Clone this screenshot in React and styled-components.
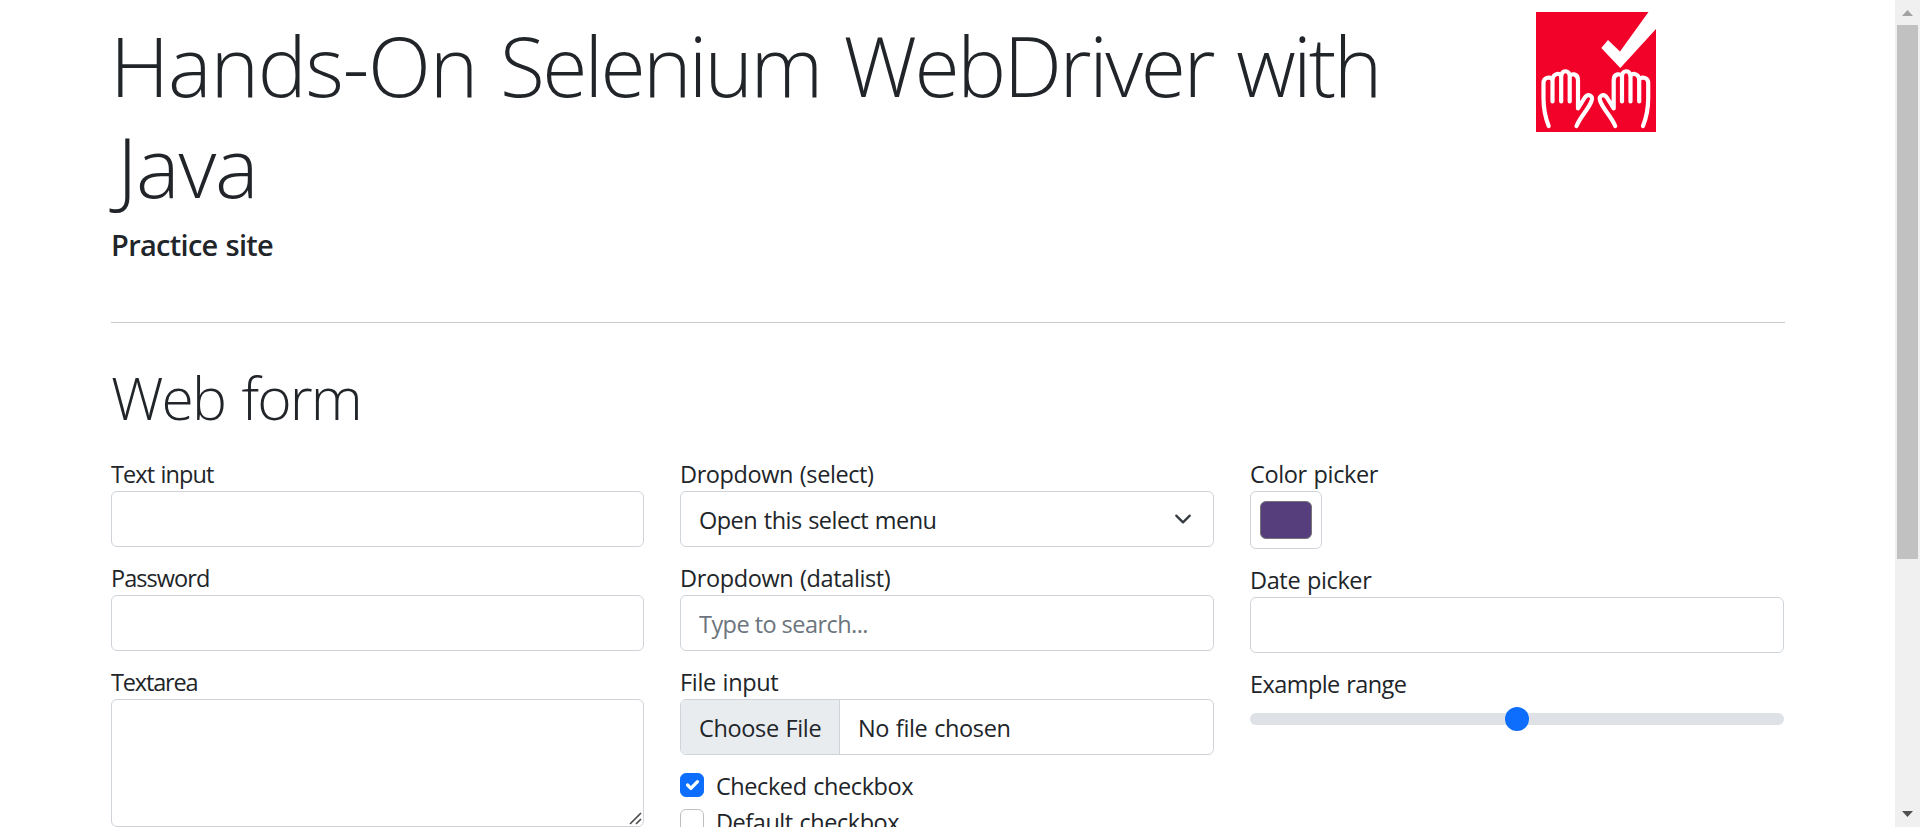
import React from "react";
import styled, { createGlobalStyle, css } from "styled-components";

const GlobalStyle = createGlobalStyle`
  *, *::before, *::after { box-sizing: border-box; }
  body {
    margin: 0;
    background: #fff;
    color: #212529;
    font: 400 23.5px/36px "Segoe UI", "Open Sans", "Noto Sans", sans-serif;
    word-spacing: 1px;
    overflow: hidden;
  }
`;

const Viewport = styled.div`
  display: flex;
  height: 827px;
  overflow: hidden;
`;

const Page = styled.main`
  flex: 1;
  min-width: 0;
  padding: 0 110px 0 111px;
  overflow: hidden;
`;

const Header = styled.header`
  display: flex;
  height: 322px;
`;

const Titles = styled.div`
  width: 1425px;
  padding-top: 15px;
`;

const Title = styled.h1`
  margin: 0 0 0 -1px;
  font-size: 82.3px;
  font-weight: 300;
  line-height: 101px;
  word-spacing: 1.6px;
`;

const Word = styled.span`
  margin-left: ${(p) => p.$indent || 0}px;
  letter-spacing: ${(p) => p.$tracking}px;
`;

const Subtitle = styled.h5`
  margin: 10px 0 0;
  font-size: 29px;
  font-weight: 600;
  line-height: 36px;
  letter-spacing: -0.7px;
`;

const Logo = styled.svg`
  width: 120px;
  height: 120px;
  margin-top: 12px;
`;

const Rule = styled.hr`
  width: 1674px;
  height: 1px;
  margin: 0;
  border: 0;
  background: #c8c9ca;
`;

const FormTitle = styled.h1`
  margin: 38px 0 22px;
  font-size: 58.8px;
  font-weight: 300;
  line-height: 72px;
  letter-spacing: -1.9px;
  word-spacing: 3px;
`;

const Columns = styled.form`
  display: grid;
  grid-template-columns: 533px 534px 534px;
  column-gap: 36px;
  align-items: start;
`;

const Column = styled.div`
  display: flex;
  flex-direction: column;
  gap: 12px;
`;

const FieldLabel = styled.label`
  display: block;
`;

const Caption = styled.span`
  display: block;
  height: 36px;
  line-height: 38px;
  white-space: nowrap;
  letter-spacing: ${(p) => p.$tracking}px;
`;

const control = css`
  display: flex;
  align-items: center;
  width: 100%;
  height: 56px;
  margin: 0;
  border: 1px solid #ced4da;
  border-radius: 6px;
  background: #fff;
  color: #212529;
  font: inherit;
  outline: 0;
`;

const TextControl = styled.input`
  ${control}
  padding: 2px 18px 0;
  letter-spacing: -0.55px;
  &::placeholder { color: #6c757d; opacity: 1; }
`;

const TextAreaFrame = styled.span`
  display: block;
  position: relative;
  height: 128px;
`;

const TextArea = styled.textarea`
  ${control}
  height: 128px;
  padding: 9px 18px;
  resize: none;
`;

const Grip = styled.svg`
  position: absolute;
  right: 2px;
  bottom: 2px;
  width: 13px;
  height: 13px;
`;

const SelectControl = styled.span`
  ${control}
  justify-content: space-between;
  padding: 0 18px;
  letter-spacing: -0.52px;
`;

const SelectValue = styled.span`
  padding-top: 2px;
`;

const Chevron = styled.svg`
  width: 24px;
  height: 18px;
`;

const FileControl = styled.span`
  ${control}
  overflow: hidden;
`;

const FileButton = styled.span`
  width: 159px;
  height: 54px;
  padding-left: 18px;
  border-right: 1px solid #ced4da;
  background: #e9ecef;
  line-height: 56px;
  letter-spacing: -0.36px;
`;

const FileName = styled.span`
  padding: 2px 0 0 18px;
  letter-spacing: -0.36px;
`;

const Checks = styled.div`
  display: flex;
  flex-direction: column;
`;

const Check = styled.label`
  display: flex;
  align-items: flex-start;
  height: 36px;
  gap: 12px;
`;

const CheckBox = styled.span`
  width: 24px;
  height: 24px;
  margin-top: 6px;
  border: 1px solid ${(p) => (p.$checked ? "#0d6efd" : "#bfbfbf")};
  border-radius: 6px;
  background: ${(p) => (p.$checked ? "#0d6efd" : "#fff")};
  svg { display: block; width: 22px; height: 22px; }
`;

const ColorControl = styled.span`
  ${control}
  width: 72px;
  height: 58px;
  padding: 9px;
`;

const Swatch = styled.span`
  width: 52px;
  height: 38px;
  border: 1px solid #767676;
  border-radius: 6px;
  background: #563d7c;
`;

const Range = styled.span`
  display: flex;
  align-items: center;
  justify-content: center;
  height: 12px;
  margin-top: 12px;
  border-radius: 12px;
  background: #dee2e6;
`;

const Thumb = styled.span`
  flex: none;
  width: 24px;
  height: 24px;
  border-radius: 50%;
  background: #0d6efd;
`;

const ScrollBar = styled.aside`
  display: flex;
  flex-direction: column;
  align-items: center;
  width: 25px;
  background: #f0f0f0;
`;

const ScrollArrow = styled.svg`
  width: 25px;
  height: 25px;
`;

const ScrollThumb = styled.div`
  width: 21px;
  height: 534px;
  margin-bottom: auto;
  background: #c1c1c1;
`;

const HandShape = () => (
  <g fill="none" stroke="#fff" strokeWidth="4.2" strokeLinecap="round" strokeLinejoin="round">
    <path d="M12.7 114C9.5 106 7.5 96 7.5 86V71.5C7.5 64.5 15 64.5 16.5 68V89.5M16.5 68C17 60.500 25 60.500 25.200 65V89.500M25.200 65C25.500 57.500 33.500 57.500 33.700 64V89.500M33.700 65C34.500 60.500 42 61.500 42 68V96.500L48.500 86C52 80.500 58 84 55.500 89C52.500 97.500 45 103.500 40.500 114" />
  </g>
);

const Field = ({ label, tracking, children }) => (
  <FieldLabel>
    <Caption $tracking={tracking}>{label}</Caption>
    {children}
  </FieldLabel>
);

export default function App() {
  return (
    <>
      <GlobalStyle />
      <Viewport>
        <Page>
          <Header>
            <Titles>
              <Title>
                <Word $tracking={-1.2}>Hands-On</Word> <Word $tracking={-2.75}>Selenium</Word>{" "}
                <Word $tracking={-2.4}>WebDriver</Word> <Word $tracking={-2.7}>with</Word>
                <br />
                <Word $tracking={-1.2} $indent={7}>Java</Word>
              </Title>
              <Subtitle>Practice site</Subtitle>
            </Titles>
            <Logo viewBox="0 0 120 120">
              <rect width="120" height="120" fill="#f20229" />
              <path d="M65.3 36 72 28 84 39.500 112.500 0H120V17L84.300 56Z" fill="#fff" />
              <HandShape />
              <g transform="translate(119.700 0) scale(-1 1)">
                <HandShape />
              </g>
            </Logo>
          </Header>
          <Rule />
          <FormTitle>Web form</FormTitle>
          <Columns>
            <Column>
              <Field label="Text input" tracking={-0.9}>
                <TextControl type="text" />
              </Field>
              <Field label="Password" tracking={-0.95}>
                <TextControl type="password" />
              </Field>
              <Field label="Textarea" tracking={-1.15}>
                <TextAreaFrame>
                  <TextArea />
                  <Grip viewBox="0 0 13 13">
                    <path d="M1 12 12 1M7 12l5-5" stroke="#4d4d4d" strokeWidth="1.7" fill="none" />
                  </Grip>
                </TextAreaFrame>
              </Field>
            </Column>
            <Column>
              <Field label="Dropdown (select)" tracking={-0.4}>
                <SelectControl>
                  <SelectValue>Open this select menu</SelectValue>
                  <Chevron viewBox="0 0 16 16">
                    <path d="m2 5 6 6 6-6" fill="none" stroke="#343a40" strokeWidth="2" strokeLinecap="round" strokeLinejoin="round" />
                  </Chevron>
                </SelectControl>
              </Field>
              <Field label="Dropdown (datalist)" tracking={-0.38}>
                <TextControl placeholder="Type to search..." />
              </Field>
              <Field label="File input" tracking={-0.34}>
                <FileControl>
                  <FileButton>Choose File</FileButton>
                  <FileName>No file chosen</FileName>
                </FileControl>
              </Field>
              <Checks>
                <Check>
                  <CheckBox $checked>
                    <svg viewBox="0 0 20 20">
                      <path d="m6 10 3 3 6-6" fill="none" stroke="#fff" strokeWidth="3" strokeLinecap="round" strokeLinejoin="round" />
                    </svg>
                  </CheckBox>
                  <Caption $tracking={-0.43}>Checked checkbox</Caption>
                </Check>
                <Check>
                  <CheckBox />
                  <Caption $tracking={-0.45}>Default checkbox</Caption>
                </Check>
              </Checks>
            </Column>
            <Column>
              <Field label="Color picker" tracking={-0.36}>
                <ColorControl>
                  <Swatch />
                </ColorControl>
              </Field>
              <Field label="Date picker" tracking={-0.37}>
                <TextControl type="text" />
              </Field>
              <Field label="Example range" tracking={-0.57}>
                <Range>
                  <Thumb />
                </Range>
              </Field>
            </Column>
          </Columns>
        </Page>
        <ScrollBar>
          <ScrollArrow viewBox="0 0 25 25">
            <path d="M7 16h11l-5.500-6Z" fill="#a3a3a3" />
          </ScrollArrow>
          <ScrollThumb />
          <ScrollArrow viewBox="0 0 25 25">
            <path d="M7 9h11l-5.500 6Z" fill="#505050" />
          </ScrollArrow>
        </ScrollBar>
      </Viewport>
    </>
  );
}
